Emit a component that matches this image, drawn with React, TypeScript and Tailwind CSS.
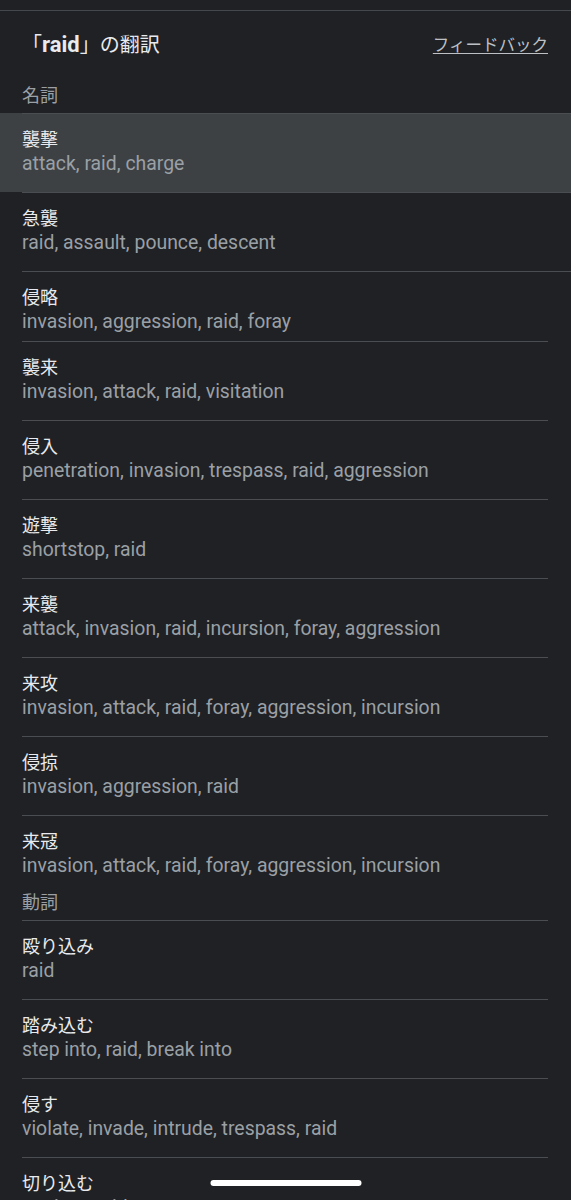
import React from 'react';

interface Entry {
  word: string;
  meanings: string;
  wide?: boolean;
  active?: boolean;
  short?: boolean;
}

interface Section {
  label: string;
  entries: Entry[];
}

const sections: Section[] = [
  {
    label: '名詞',
    entries: [
      { word: '襲撃', meanings: 'attack, raid, charge', wide: true, active: true },
      { word: '急襲', meanings: 'raid, assault, pounce, descent', wide: true },
      { word: '侵略', meanings: 'invasion, aggression, raid, foray', wide: true, short: true },
      { word: '襲来', meanings: 'invasion, attack, raid, visitation' },
      { word: '侵入', meanings: 'penetration, invasion, trespass, raid, aggression' },
      { word: '遊撃', meanings: 'shortstop, raid' },
      { word: '来襲', meanings: 'attack, invasion, raid, incursion, foray, aggression' },
      { word: '来攻', meanings: 'invasion, attack, raid, foray, aggression, incursion' },
      { word: '侵掠', meanings: 'invasion, aggression, raid' },
      { word: '来冦', meanings: 'invasion, attack, raid, foray, aggression, incursion' },
    ],
  },
  {
    label: '動詞',
    entries: [
      { word: '殴り込み', meanings: 'raid' },
      { word: '踏み込む', meanings: 'step into, raid, break into' },
      { word: '侵す', meanings: 'violate, invade, intrude, trespass, raid' },
      { word: '切り込む', meanings: 'cut into, raid' },
    ],
  },
];

const EntryRow: React.FC<{ entry: Entry; last: boolean }> = ({ entry, last }) => (
  <div className={entry.active ? 'bg-[#3d4144]' : ''}>
    <div
      className={`ml-[22px] border-t border-[#4a4d51] pt-[14px] ${entry.wide ? 'mr-0' : 'mr-[23px]'} ${
        entry.short ? 'pb-[7px]' : last ? 'pb-[13px]' : 'pb-[16px]'
      }`}
    >
      <div className="text-[18px] leading-6 text-[#e8eaed]">{entry.word}</div>
      <div className="text-[19.4px] leading-6 text-[#9aa0a6]">{entry.meanings}</div>
    </div>
  </div>
);

export default function App() {
  return (
    <div
      className="relative h-[1200px] w-full overflow-hidden bg-[#202124]"
      style={{ fontFamily: 'Roboto, "Noto Sans CJK JP", sans-serif' }}
    >
      <div className="h-[10px]" />
      <div className="border-t border-[#45484c]" />

      <div className="flex items-center justify-between pl-[22px] pr-[23px] pt-[20px]">
        <h1 className="text-[20px] leading-7 text-[#e8eaed]">
          「<span className="text-[22px] font-bold">raid</span>」の翻訳
        </h1>
        <a className="pt-[2px] text-[16.5px] leading-6 text-[#bdc1c6] underline underline-offset-2">フィードバック</a>
      </div>

      {sections.map((section, si) => (
        <div key={section.label}>
          <div className={`pl-[22px] text-[18px] leading-6 text-[#9aa0a6] ${si === 0 ? 'mt-[25px]' : ''} mb-[5px]`}>
            {section.label}
          </div>
          {section.entries.map((entry, i) => (
            <EntryRow key={entry.word} entry={entry} last={i === section.entries.length - 1} />
          ))}
        </div>
      ))}

      <div className="absolute bottom-[14px] left-1/2 h-[6px] w-[151px] -translate-x-1/2 rounded-full bg-white" />
    </div>
  );
}
